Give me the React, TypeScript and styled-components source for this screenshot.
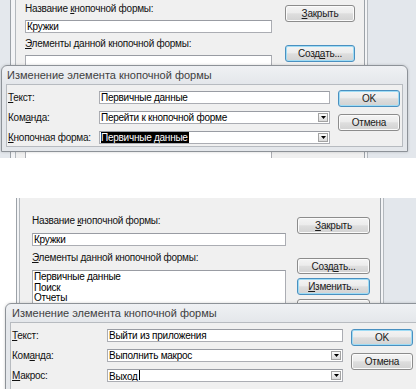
import React from "react";
import styled, { createGlobalStyle, css } from "styled-components";

const GlobalStyle = createGlobalStyle`
  html, body { margin: 0; padding: 0; background: #ffffff; }
  body {
    font-family: "Liberation Sans", Arial, sans-serif;
    font-size: 10px;
    color: #000;
    letter-spacing: -0.25px;
  }
`;

const Page = styled.div`
  width: 416px;
  height: 389px;
  overflow: hidden;
  display: flex;
  flex-direction: column;
  background: #fff;
`;

const Scene = styled.div<{ $h: number }>`
  position: relative;
  flex: none;
  height: ${(p) => p.$h}px;
  overflow: hidden;
`;

const Spacer = styled.div<{ $h: number }>`
  flex: none;
  height: ${(p) => p.$h}px;
`;

const Backdrop = styled.div`
  display: flex;
  height: 100%;
`;

const LeftFrame = styled.div<{ $variant: "top" | "bottom" }>`
  flex: none;
  ${(p) =>
    p.$variant === "top"
      ? css`
          width: 17px;
          background: linear-gradient(
            to right,
            #e4e8ed 0 10px,
            #9ca2a8 10px 11px,
            #f3f4f6 11px 15px,
            #b3b8bd 15px 16px,
            #f0f0f0 16px
          );
        `
      : css`
          width: 21px;
          background: linear-gradient(
            to right,
            #ffffff 0 16px,
            #9ca2a8 16px 17px,
            #f3f4f6 17px 19px,
            #b3b8bd 19px 20px,
            #f0f0f0 20px
          );
        `}
`;

const RightFrame = styled.div`
  flex: 1;
  background: linear-gradient(
    to right,
    #9ca2a8 0 1px,
    #f3f4f6 1px 3px,
    #b3b8bd 3px 4px,
    #e3e7ec 4px
  );
`;

const Client = styled.div<{ $w: number; $pl: number; $gap: number }>`
  flex: none;
  width: ${(p) => p.$w}px;
  box-sizing: border-box;
  padding-left: ${(p) => p.$pl}px;
  background: #f0f0f0;
  display: flex;
  gap: ${(p) => p.$gap}px;
`;

const FormColumn = styled.div<{ $w: number; $pt: number; $gap: number }>`
  flex: none;
  width: ${(p) => p.$w}px;
  padding-top: ${(p) => p.$pt}px;
  display: flex;
  flex-direction: column;
  gap: ${(p) => p.$gap}px;
`;

const FieldLabel = styled.div`
  height: 12px;
  line-height: 12px;
  white-space: nowrap;
  color: #111;
`;

const TextBox = styled.div`
  flex: none;
  height: 13px;
  box-sizing: border-box;
  background: #fff;
  border: 1px solid #abadb3;
  border-top-color: #999ca3;
  padding: 0 1px 0 1px;
  display: flex;
  align-items: center;
  line-height: 11px;
  white-space: nowrap;
  overflow: hidden;
`;

const ListBox = styled.div`
  flex: none;
  height: 140px;
  box-sizing: border-box;
  background: #fff;
  border: 1px solid #abadb3;
  border-top-color: #999ca3;
  padding: 1px 1px;
  line-height: 10.5px;
`;

const ListItem = styled.div`
  white-space: nowrap;
`;

const ButtonColumn = styled.div<{ $w: number; $pt: number; $first: number }>`
  flex: none;
  width: ${(p) => p.$w}px;
  padding-top: ${(p) => p.$pt}px;
  display: flex;
  flex-direction: column;
  gap: 4px;
  & > :first-child {
    margin-bottom: ${(p) => p.$first - 4}px;
  }
`;

const PushButton = styled.div<{ $default?: boolean; $h?: number }>`
  flex: none;
  height: ${(p) => p.$h ?? 17}px;
  box-sizing: border-box;
  border: 1px solid ${(p) => (p.$default ? "#4a90c0" : "#8c8c8c")};
  border-radius: 3px;
  background: linear-gradient(#f4f4f4 0%, #ececec 45%, #dedede 52%, #d2d2d2 100%);
  box-shadow: inset 0 0 0 1px ${(p) => (p.$default ? "#9fdcf5" : "#fbfbfb")};
  display: flex;
  align-items: center;
  justify-content: center;
  white-space: nowrap;
  color: #1a1a1a;
`;

const Key = styled.span`
  text-decoration: underline;
`;

const Dialog = styled.div<{ $x: number; $y: number; $w: number; $h: number }>`
  position: absolute;
  left: ${(p) => p.$x}px;
  top: ${(p) => p.$y}px;
  width: ${(p) => p.$w}px;
  height: ${(p) => p.$h}px;
  box-sizing: border-box;
  border: 1px solid #8d9298;
  border-radius: 6px 6px 0 0;
  background: linear-gradient(#eff1f4 0px, #e4e7eb 18px, #e4e7eb 100%);
  padding: 0 4px 4px;
  display: flex;
  flex-direction: column;
  box-shadow: 0 0 3px rgba(0, 0, 0, 0.18);
`;

const TitleBar = styled.div<{ $pl: number }>`
  flex: none;
  height: 18px;
  display: flex;
  align-items: center;
  padding-left: ${(p) => p.$pl}px;
  font-size: 11px;
  letter-spacing: 0;
  color: #404040;
  white-space: nowrap;
`;

const DialogBody = styled.div<{ $pt: number }>`
  flex: 1;
  min-height: 0;
  overflow: hidden;
  background: #f0f0f0;
  border: 1px solid #b7bbc0;
  padding: ${(p) => p.$pt}px 0 0 1px;
  display: flex;
  gap: 8px;
`;

const FieldGrid = styled.div<{ $labelW: number; $fieldW: number }>`
  flex: none;
  display: grid;
  grid-template-columns: ${(p) => p.$labelW}px ${(p) => p.$fieldW}px;
  grid-auto-rows: 20px;
  align-items: start;
`;

const RowLabel = styled.div`
  height: 13px;
  line-height: 13px;
  white-space: nowrap;
  color: #111;
`;

const DialogButtons = styled.div<{ $mt: number }>`
  flex: none;
  width: 62px;
  margin-top: ${(p) => p.$mt}px;
  display: flex;
  flex-direction: column;
  gap: 7px;
`;

const DropButton = styled.div`
  flex: none;
  margin-left: auto;
  width: 10px;
  height: 9px;
  box-sizing: border-box;
  border: 1px solid #a3a3a3;
  background: linear-gradient(#fbfbfb, #dadada);
  display: flex;
  align-items: center;
  justify-content: center;
`;

const Selected = styled.span`
  background: #000;
  color: #fff;
  line-height: 11px;
  padding-right: 1px;
`;

const Caret = styled.span`
  display: inline-block;
  width: 1px;
  height: 10px;
  margin-left: 1px;
  background: #000;
`;

const Combo: React.FC<{ children?: React.ReactNode }> = ({ children }) => (
  <TextBox>
    <span>{children}</span>
    <DropButton>
      <svg width="5" height="3" viewBox="0 0 5 3">
        <path d="M0 0H5L2.5 3Z" fill="#000" />
      </svg>
    </DropButton>
  </TextBox>
);

export default function App() {
  return (
    <>
      <GlobalStyle />
      <Page>
        <Scene $h={158}>
          <Backdrop>
            <LeftFrame $variant="top" />
            <Client $w={347} $pl={8} $gap={13}>
              <FormColumn $w={247} $pt={3} $gap={5}>
                <FieldLabel>
                  Название <Key>к</Key>нопочной формы:
                </FieldLabel>
                <TextBox>Кружки</TextBox>
                <FieldLabel>
                  <Key>Э</Key>лементы данной кнопочной формы:
                </FieldLabel>
                <ListBox />
              </FormColumn>
              <ButtonColumn $w={70} $pt={5} $first={23}>
                <PushButton>
                  <Key>З</Key>акрыть
                </PushButton>
                <PushButton $default>
                  Созд<Key>а</Key>ть...
                </PushButton>
                <PushButton />
                <PushButton />
                <PushButton />
                <PushButton />
              </ButtonColumn>
            </Client>
            <RightFrame />
          </Backdrop>
          <Dialog $x={1} $y={65} $w={407} $h={87}>
            <TitleBar $pl={1}>Изменение элемента кнопочной формы</TitleBar>
            <DialogBody $pt={6}>
              <FieldGrid $labelW={91} $fieldW={231}>
                <RowLabel>
                  <Key>Т</Key>екст:
                </RowLabel>
                <TextBox>Первичные данные</TextBox>
                <RowLabel>
                  Ком<Key>а</Key>нда:
                </RowLabel>
                <Combo>Перейти к кнопочной форме</Combo>
                <RowLabel>
                  <Key>К</Key>нопочная форма:
                </RowLabel>
                <Combo>
                  <Selected>Первичные данные</Selected>
                </Combo>
              </FieldGrid>
              <DialogButtons $mt={-1}>
                <PushButton $default>OK</PushButton>
                <PushButton>Отмена</PushButton>
              </DialogButtons>
            </DialogBody>
          </Dialog>
        </Scene>

        <Spacer $h={40} />

        <Scene $h={191}>
          <Backdrop>
            <LeftFrame $variant="bottom" />
            <Client $w={359} $pl={11} $gap={11}>
              <FormColumn $w={254} $pt={17} $gap={6}>
                <FieldLabel>
                  Название <Key>к</Key>нопочной формы:
                </FieldLabel>
                <TextBox>Кружки</TextBox>
                <FieldLabel>
                  <Key>Э</Key>лементы данной кнопочной формы:
                </FieldLabel>
                <ListBox>
                  <ListItem>Первичные данные</ListItem>
                  <ListItem>Поиск</ListItem>
                  <ListItem>Отчеты</ListItem>
                </ListBox>
              </FormColumn>
              <ButtonColumn $w={73} $pt={19} $first={24}>
                <PushButton>
                  <Key>З</Key>акрыть
                </PushButton>
                <PushButton $h={16}>
                  Созд<Key>а</Key>ть...
                </PushButton>
                <PushButton $default>
                  <Key>И</Key>зменить...
                </PushButton>
                <PushButton />
              </ButtonColumn>
            </Client>
            <RightFrame />
          </Backdrop>
          <Dialog $x={5} $y={105} $w={420} $h={200}>
            <TitleBar $pl={2}>Изменение элемента кнопочной формы</TitleBar>
            <DialogBody $pt={6}>
              <FieldGrid $labelW={95} $fieldW={236}>
                <RowLabel>
                  <Key>Т</Key>екст:
                </RowLabel>
                <TextBox>Выйти из приложения</TextBox>
                <RowLabel>
                  Ком<Key>а</Key>нда:
                </RowLabel>
                <Combo>Выполнить макрос</Combo>
                <RowLabel>
                  <Key>М</Key>акрос:
                </RowLabel>
                <Combo>
                  Выход
                  <Caret />
                </Combo>
              </FieldGrid>
              <DialogButtons $mt={0}>
                <PushButton $default>OK</PushButton>
                <PushButton>Отмена</PushButton>
              </DialogButtons>
            </DialogBody>
          </Dialog>
        </Scene>
      </Page>
    </>
  );
}
